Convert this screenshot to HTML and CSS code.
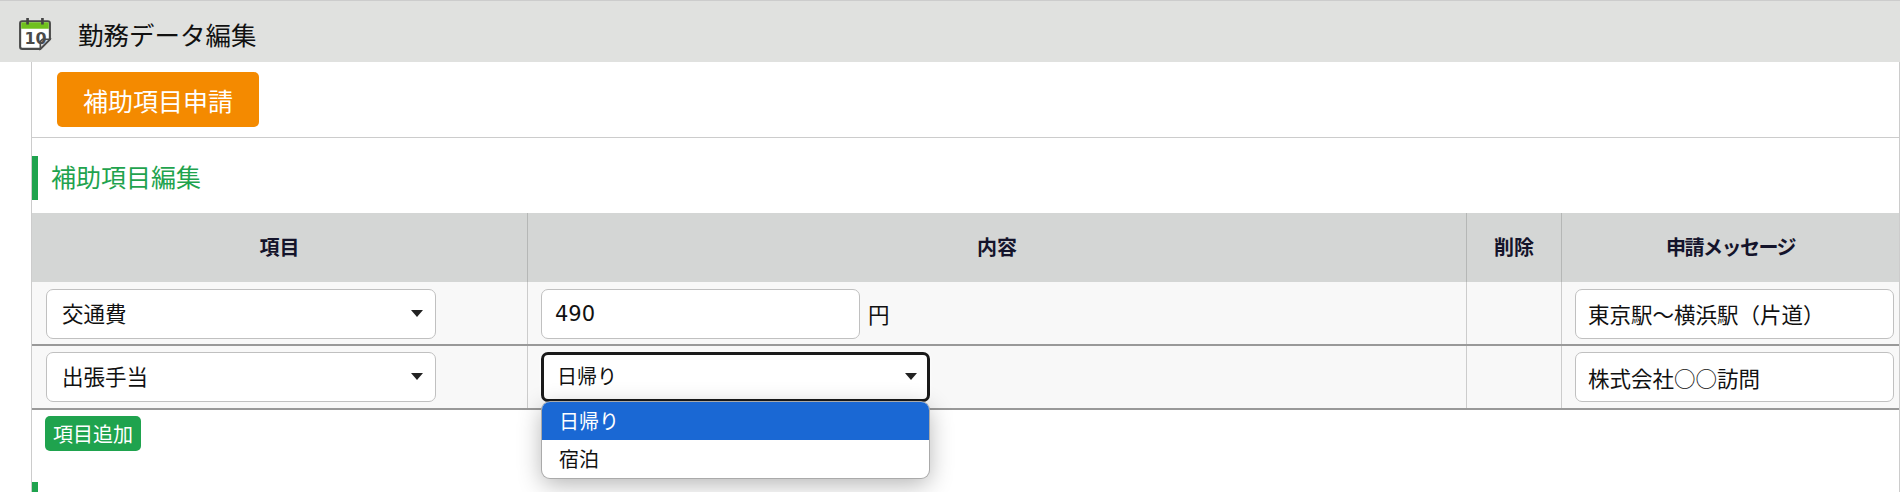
FILE: index.html
```html
<!DOCTYPE html>
<html lang="ja">
<head>
    <meta charset="UTF-8">
    <title>勤務データ編集</title>
    <link rel="stylesheet" href="styles.css">
</head>
<body>
    <header class="page-head">
        <svg class="cal-icon" width="34" height="34" viewBox="0 0 32 32">
            <path d="M4 4h24a2 2 0 0 1 2 2v15l-9 9H4a2 2 0 0 1-2-2V6a2 2 0 0 1 2-2z" fill="#fff" stroke="#4a4a4a" stroke-width="2"/>
            <path d="M3 6a1 1 0 0 1 1-1h24a1 1 0 0 1 1 1v5H3z" fill="#6fc01e"/>
            <path d="M9 1v6M23 1v6" stroke="#444" stroke-width="2.5"/>
            <path d="M21 30l9-9h-7l-2 2z" fill="#ddd" stroke="#4a4a4a" stroke-width="1.5"/>
            <text x="6" y="25" class="cal-num">10</text>
        </svg>
        <h1>勤務データ編集</h1>
    </header>

    <main class="content">
        <div class="top-action">
            <button class="btn-orange">補助項目申請</button>
        </div>

        <h2 class="section-title">補助項目編集</h2>

        <table class="edit-table">
            <thead>
                <tr>
                    <th class="col-item">項目</th>
                    <th class="col-value">内容</th>
                    <th class="col-del">削除</th>
                    <th class="col-msg">申請メッセージ</th>
                </tr>
            </thead>
            <tbody>
                <tr>
                    <td><div class="select item-select">交通費</div></td>
                    <td>
                        <div class="amount">
                            <input class="field amount-input" type="text" value="490">
                            <span>円</span>
                        </div>
                    </td>
                    <td></td>
                    <td><input class="field msg-input" type="text" value="東京駅～横浜駅（片道）"></td>
                </tr>
                <tr>
                    <td><div class="select item-select">出張手当</div></td>
                    <td>
                        <div class="select-wrap">
                            <div class="select value-select">日帰り</div>
                            <ul class="dropdown">
                                <li class="active">日帰り</li>
                                <li>宿泊</li>
                            </ul>
                        </div>
                    </td>
                    <td></td>
                    <td><input class="field msg-input" type="text" value="株式会社○○訪問"></td>
                </tr>
            </tbody>
        </table>

        <button class="btn-green">項目追加</button>

        <div class="next-section"></div>
    </main>
</body>
</html>
```

FILE: styles.css
```css
html, body {
    height: 492px;
    overflow: hidden;
}
body {
    margin: 0;
    font-family: "Noto Sans CJK JP", "Noto Sans", sans-serif;
    color: #111;
    background-color: #fff;
}
.page-head {
    display: flex;
    align-items: center;
    height: 61px;
    border-top: 1px solid #ccc;
    background-color: #e0e1df;
}
.cal-icon {
    margin-left: 18px;
    margin-top: 4px;
}
.cal-num {
    font-family: "DejaVu Sans", sans-serif;
    font-size: 15px;
    font-weight: bold;
    fill: #4a4a4a;
}
.page-head h1 {
    margin: 4px 0 0 26px;
    font-size: 25.5px;
    font-weight: normal;
    line-height: 1;
    color: #111;
}
.content {
    margin-left: 31px;
    height: 430px;
    border-left: 1px solid #ccc;
    border-right: 1px solid #ccc;
    overflow: hidden;
}
.top-action {
    height: 65px;
    padding: 10px 0 0 25px;
    border-bottom: 1px solid #ccc;
}
.btn-orange {
    display: block;
    width: 202px;
    height: 55px;
    padding: 0;
    border: none;
    border-radius: 5px;
    background-color: #f48a00;
    color: #fff;
    font-family: inherit;
    font-size: 25px;
}
.section-title {
    margin: 18px 0 13px -1px;
    height: 44px;
    padding-left: 13px;
    border-left: 7px solid #1fa34e;
    font-size: 25px;
    font-weight: normal;
    line-height: 40px;
    color: #1fa34e;
}
.edit-table {
    width: 100%;
    table-layout: fixed;
    border-collapse: collapse;
}
.edit-table th {
    height: 67px;
    padding: 0 0 2px;
    background-color: #d4d6d5;
    border-left: 1px solid #b5b7b6;
    font-size: 20px;
    font-weight: bold;
    color: #14142b;
}
.edit-table th:first-child {
    border-left: none;
}
.edit-table th.col-msg {
    letter-spacing: -1.5px;
}
.col-item { width: 495px; }
.col-value { width: 938px; }
.col-del { width: 94px; }
.edit-table td {
    height: 62px;
    padding: 0 0 0 13px;
    background-color: #f8f8f8;
    border-left: 1px solid #ccc;
    border-bottom: 2px solid #999;
    font-size: 21.5px;
}
.edit-table td:first-child {
    padding-left: 14px;
    border-left: none;
}
.select, .field {
    display: block;
    box-sizing: border-box;
    height: 50px;
    border: 1px solid #c0c0c0;
    border-radius: 7px;
    background-color: #fff;
    padding: 0 13px;
    font-family: inherit;
    font-size: 21.5px;
    color: #111;
    line-height: 46px;
}
tbody tr:first-child .select,
tbody tr:first-child .field {
    margin-top: 1px;
}
.select {
    position: relative;
    padding-left: 15px;
}
.select::after {
    content: "";
    position: absolute;
    right: 12px;
    top: 20px;
    border-left: 6px solid transparent;
    border-right: 6px solid transparent;
    border-top: 7px solid #222;
}
.item-select {
    width: 390px;
}
.amount {
    display: flex;
    align-items: center;
    gap: 8px;
}
.amount-input {
    width: 319px;
    font-family: "DejaVu Sans", sans-serif;
    font-size: 21px;
}
.msg-input {
    width: 319px;
    padding-left: 12px;
}
.select-wrap {
    position: relative;
    width: 389px;
}
.value-select {
    border: 3px solid #1a1a1a;
    line-height: 42px;
    padding-left: 13px;
    font-size: 20px;
    box-shadow: 0 0 4px rgba(255, 255, 255, 0.8);
}
.value-select::after {
    right: 10px;
    top: 18px;
}
.dropdown {
    position: absolute;
    left: 1px;
    top: 50px;
    z-index: 5;
    width: 387px;
    margin: 0;
    padding: 0;
    list-style: none;
    background-color: #fff;
    border-radius: 8px;
    overflow: hidden;
    box-shadow: 0 0 0 1px #aaa, 0 6px 24px rgba(0, 0, 0, 0.3);
    font-size: 20px;
}
.dropdown li {
    height: 38px;
    padding-left: 17px;
    line-height: 38px;
}
.dropdown .active {
    background-color: #1a68d4;
    color: #fff;
}
.btn-green {
    display: block;
    width: 96px;
    height: 35px;
    margin: 6px 0 0 13px;
    padding: 0;
    border: none;
    border-radius: 5px;
    background-color: #1fa34e;
    color: #fff;
    font-family: inherit;
    font-size: 20px;
}
.next-section {
    margin: 31px 0 0 -1px;
    width: 7px;
    height: 44px;
    background-color: #1fa34e;
}
```
